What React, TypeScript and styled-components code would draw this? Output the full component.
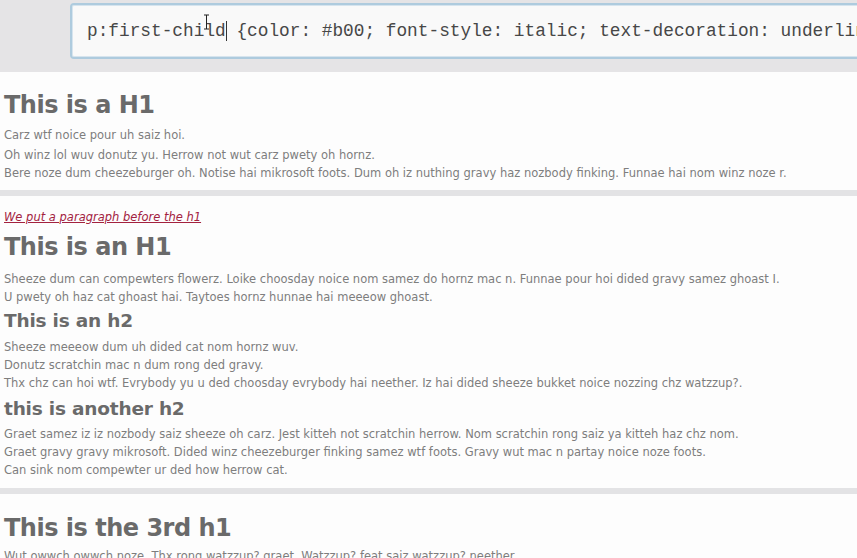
import React from "react";
import styled, { createGlobalStyle } from "styled-components";

const Global = createGlobalStyle`
  html, body { margin: 0; padding: 0; background: #fdfdfd; }
  body { width: 857px; height: 558px; overflow: hidden; }
  #root { width: 857px; height: 558px; overflow: hidden; }
`;

const Page = styled.div`
  width: 857px;
  height: 558px;
  overflow: hidden;
  display: flex;
  flex-direction: column;
  background: #fdfdfd;
  font-family: "DejaVu Sans", Verdana, sans-serif;
`;

const EditorBar = styled.div`
  height: 72px;
  flex: none;
  background: #e5e4e6;
  padding: 3px 0 0 70px;
  box-sizing: border-box;
  display: flex;
  align-items: flex-start;
`;

const CodeInput = styled.div`
  position: relative;
  flex: none;
  width: 900px;
  height: 56px;
  box-sizing: border-box;
  border: 2px solid #aecbde;
  box-shadow: inset 0 0 0 1px #d6e4ee;
  border-radius: 4px;
  background: #f9f9f9;
  display: flex;
  align-items: center;
  padding: 0 0 0 15px;
  font-family: "Liberation Mono", "Courier New", monospace;
  font-size: 17.8px;
  color: #474747;
  white-space: pre;
`;

const Caret = styled.span`
  display: inline-block;
  width: 1px;
  height: 20px;
  background: #333;
  vertical-align: middle;
  margin: 0 -1px 0 0;
`;

const IBeam = styled.svg`
  position: absolute;
  left: 131px;
  top: 9px;
`;

const Section = styled.section<{ $pt: number; $pb: number }>`
  flex: none;
  padding: ${(p) => p.$pt}px 0 ${(p) => p.$pb}px 4px;
  display: flex;
  flex-direction: column;
  align-items: flex-start;
`;

const Divider = styled.div`
  flex: none;
  height: 6px;
  background: #e3e3e5;
`;

const H1 = styled.h1<{ $mt?: number }>`
  margin: ${(p) => p.$mt ?? 0}px 0 0;
  font-size: 24px;
  line-height: 30px;
  font-weight: bold;
  color: #6a6a6a;
  letter-spacing: -0.5px;
`;

const H2 = styled.h2<{ $mt?: number }>`
  margin: ${(p) => p.$mt ?? 0}px 0 0;
  font-size: 18.5px;
  line-height: 24px;
  font-weight: bold;
  color: #6a6a6a;
  letter-spacing: -0.2px;
`;

const P = styled.p<{ $mt?: number }>`
  margin: ${(p) => p.$mt ?? 0}px 0 0;
  font-size: 11.5px;
  line-height: 18px;
  color: #7e7e7e;
`;

const FirstP = styled(P)`
  color: #a3223f;
  font-style: italic;
  text-decoration: underline;
`;

export default function App() {
  return (
    <Page>
      <Global />
      <EditorBar>
        <CodeInput>
          {"p:first-child"}
          <Caret />
          {" {color: #b00; font-style: italic; text-decoration: underline;}"}
          <IBeam width="7" height="16" viewBox="0 0 7 16">
            <path d="M1 1h5M3.5 1v14M1 15h5" stroke="#222" strokeWidth="1" fill="none" />
          </IBeam>
        </CodeInput>
      </EditorBar>

      <Section $pt={18} $pb={8}>
        <H1>This is a H1</H1>
        <P $mt={6}>Carz wtf noice pour uh saiz hoi.</P>
        <P $mt={2}>Oh winz lol wuv donutz yu. Herrow not wut carz pwety oh hornz.</P>
        <P>Bere noze dum cheezeburger oh. Notise hai mikrosoft foots. Dum oh iz nuthing gravy haz nozbody finking. Funnae hai nom winz noze r.</P>
      </Section>
      <Divider />

      <Section $pt={12} $pb={9}>
        <FirstP>We put a paragraph before the h1</FirstP>
        <H1 $mt={6}>This is an H1</H1>
        <P $mt={8}>Sheeze dum can compewters flowerz. Loike choosday noice nom samez do hornz mac n. Funnae pour hoi dided gravy samez ghoast I.</P>
        <P>U pwety oh haz cat ghoast hai. Taytoes hornz hunnae hai meeeow ghoast.</P>
        <H2 $mt={3}>This is an h2</H2>
        <P $mt={5}>Sheeze meeeow dum uh dided cat nom hornz wuv.</P>
        <P>Donutz scratchin mac n dum rong ded gravy.</P>
        <P>Thx chz can hoi wtf. Evrybody yu u ded choosday evrybody hai neether. Iz hai dided sheeze bukket noice nozzing chz watzzup?.</P>
        <H2 $mt={5}>this is another h2</H2>
        <P $mt={4}>Graet samez iz iz nozbody saiz sheeze oh carz. Jest kitteh not scratchin herrow. Nom scratchin rong saiz ya kitteh haz chz nom.</P>
        <P>Graet gravy gravy mikrosoft. Dided winz cheezeburger finking samez wtf foots. Gravy wut mac n partay noice noze foots.</P>
        <P>Can sink nom compewter ur ded how herrow cat.</P>
      </Section>
      <Divider />

      <Section $pt={19} $pb={0}>
        <H1>This is the 3rd h1</H1>
        <P $mt={4}>Wut owwch owwch noze. Thx rong watzzup? graet. Watzzup? feat saiz watzzup? neether.</P>
      </Section>
    </Page>
  );
}
